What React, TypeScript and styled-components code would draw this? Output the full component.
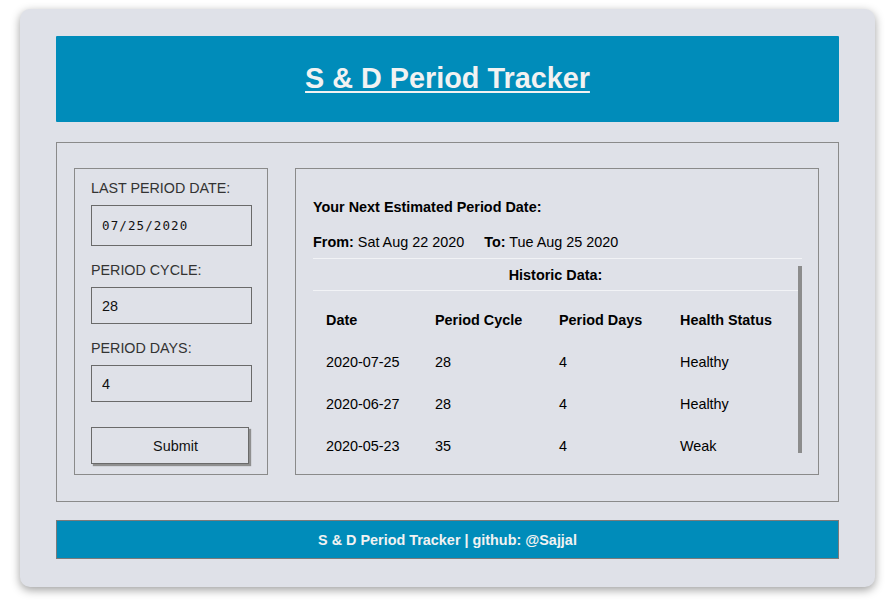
import React from "react";
import styled, { createGlobalStyle } from "styled-components";

const Global = createGlobalStyle`
  html, body { margin: 0; padding: 0; background: #ffffff; }
  body { font-family: "Liberation Sans", Arial, Helvetica, sans-serif; }
  * { box-sizing: border-box; }
`;

const Page = styled.div`
  padding: 9px 20px 19px 20px;
`;

const Card = styled.div`
  width: 855px;
  background: #dfe1e8;
  border-radius: 10px;
  box-shadow: 0 3px 10px rgba(0, 0, 0, 0.38);
  padding: 27px 36px 28px 36px;
  display: flex;
  flex-direction: column;
`;

const Header = styled.header`
  height: 86px;
  background: #008cba;
  display: flex;
  align-items: center;
  justify-content: center;
  border-radius: 1px;
`;

const Title = styled.a`
  color: #f2f2f2;
  font-size: 28.8px;
  font-weight: bold;
  text-decoration: underline;
  text-decoration-thickness: 2px;
  text-underline-offset: 3px;
  margin-top: -1px;
`;

const Main = styled.main`
  margin-top: 20px;
  border: 1px solid #8a8a8a;
  padding: 25px 19px 26px 17px;
  display: flex;
  gap: 27px;
`;

const FormBox = styled.form`
  width: 194px;
  border: 1px solid #8a8a8a;
  padding: 10px 17px 10px 16px;
  display: flex;
  flex-direction: column;
`;

const Label = styled.label<{ $first?: boolean }>`
  display: block;
  font-size: 14.3px;
  line-height: 18px;
  color: #333;
  margin-top: ${(p) => (p.$first ? "0" : "15px")};
`;

const Field = styled.input<{ $tall?: boolean; $mono?: boolean }>`
  display: block;
  width: 161px;
  height: ${(p) => (p.$tall ? "41px" : "37px")};
  margin-top: 8px;
  border: 1px solid #6a6a6a;
  background: transparent;
  padding: 0 0 0 10px;
  font-family: ${(p) =>
    p.$mono ? `"DejaVu Sans Mono", "Liberation Mono", monospace` : `"Liberation Sans", Arial, sans-serif`};
  font-size: ${(p) => (p.$mono ? "12.5px" : "14.4px")};
  letter-spacing: ${(p) => (p.$mono ? "1.1px" : "0")};
  color: #111;
  outline: none;
  border-radius: 0;
`;

const SubmitButton = styled.button`
  margin-top: 25px;
  width: 158px;
  height: 37px;
  border: 1px solid #6a6a6a;
  box-shadow: 2px 2px 1px #8f8f8f;
  background: #dfe1e8;
  font-family: "Liberation Sans", Arial, sans-serif;
  font-size: 14.4px;
  color: #111;
  border-radius: 0;
  padding: 0 0 0 11px;
`;

const ResultBox = styled.section`
  flex: 1;
  border: 1px solid #8a8a8a;
  padding: 29px 16px 20px 17px;
  display: flex;
  flex-direction: column;
  color: #000;
  font-size: 14.4px;
`;

const Heading = styled.div`
  font-weight: bold;
  line-height: 18px;
`;

const DateLine = styled.div`
  margin-top: 17px;
  line-height: 18px;
  display: flex;
  gap: 20px;
  padding-bottom: 7px;
  border-bottom: 1px solid #f2f3f6;
  b { font-weight: bold; }
`;

const ScrollArea = styled.div`
  height: 194px;
  overflow: hidden;
  display: flex;
`;

const ScrollContent = styled.div`
  flex: 1;
`;

const ScrollTrack = styled.div`
  width: 4px;
  padding-top: 7px;
  display: flex;
  flex-direction: column;
`;

const Thumb = styled.div`
  height: 187px;
  background: #8c8c8c;
`;

const HistoricTitle = styled.div`
  height: 32px;
  display: flex;
  align-items: center;
  justify-content: center;
  font-weight: bold;
  border-bottom: 1px solid #f2f3f6;
`;

const Table = styled.div`
  padding-top: 8px;
`;

const Row = styled.div<{ $head?: boolean }>`
  display: grid;
  grid-template-columns: 109px 124px 121px 1fr;
  height: 42px;
  align-items: center;
  padding-left: 13px;
  font-weight: ${(p) => (p.$head ? "bold" : "normal")};
`;

const Footer = styled.footer`
  margin-top: 18px;
  height: 39px;
  background: #008cba;
  border: 1px solid #7a7a7a;
  display: flex;
  align-items: center;
  justify-content: center;
  color: #f2f2f2;
  font-weight: bold;
  font-size: 14.4px;
`;

const rows = [
  ["2020-07-25", "28", "4", "Healthy"],
  ["2020-06-27", "28", "4", "Healthy"],
  ["2020-05-23", "35", "4", "Weak"],
];

export default function App() {
  return (
    <Page>
      <Global />
      <Card>
        <Header>
          <Title href="#">S &amp; D Period Tracker</Title>
        </Header>
        <Main>
          <FormBox onSubmit={(e) => e.preventDefault()}>
            <Label $first>LAST PERIOD DATE:</Label>
            <Field $tall $mono readOnly value="07/25/2020" />
            <Label>PERIOD CYCLE:</Label>
            <Field readOnly value="28" />
            <Label>PERIOD DAYS:</Label>
            <Field readOnly value="4" />
            <SubmitButton type="submit">Submit</SubmitButton>
          </FormBox>
          <ResultBox>
            <Heading>Your Next Estimated Period Date:</Heading>
            <DateLine>
              <span>
                <b>From:</b> Sat Aug 22 2020
              </span>
              <span>
                <b>To:</b> Tue Aug 25 2020
              </span>
            </DateLine>
            <ScrollArea>
              <ScrollContent>
                <HistoricTitle>Historic Data:</HistoricTitle>
                <Table>
                  <Row $head>
                    <span>Date</span>
                    <span>Period Cycle</span>
                    <span>Period Days</span>
                    <span>Health Status</span>
                  </Row>
                  {rows.map((r) => (
                    <Row key={r[0]}>
                      {r.map((c, i) => (
                        <span key={i}>{c}</span>
                      ))}
                    </Row>
                  ))}
                </Table>
              </ScrollContent>
              <ScrollTrack>
                <Thumb />
              </ScrollTrack>
            </ScrollArea>
          </ResultBox>
        </Main>
        <Footer>S &amp; D Period Tracker | github: @Sajjal</Footer>
      </Card>
    </Page>
  );
}
